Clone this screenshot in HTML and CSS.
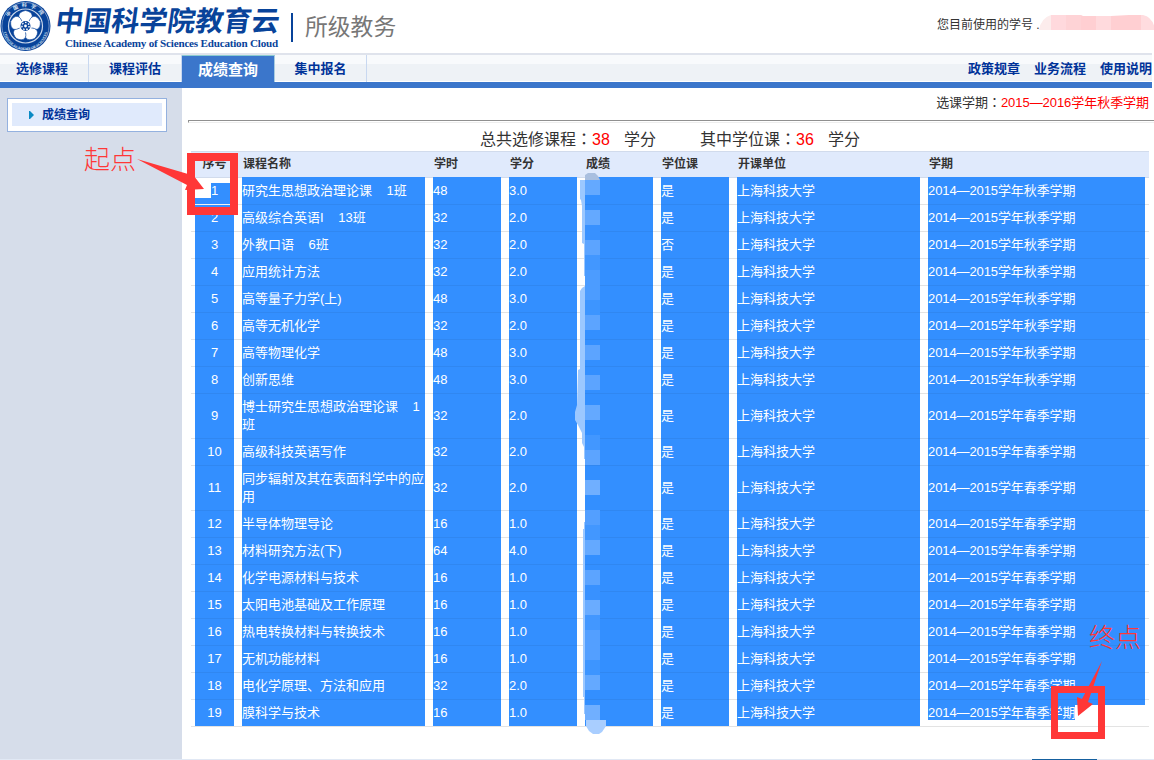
FILE: index.html
```html
<!DOCTYPE html>
<html lang="zh-CN">
<head>
<meta charset="utf-8">
<title>所级教务 - 成绩查询</title>
<link rel="stylesheet" href="styles.css">
</head>
<body>
<header class="top">
  <svg class="seal" viewBox="0 0 52 52" width="52" height="52">
    <defs>
      <path id="ring-top" d="M6.500 26a19 19 0 0 1 38 0"/>
      <path id="ring-bottom" d="M3.500 28a22 22 0 0 0 44 0"/>
    </defs>
    <circle cx="25.500" cy="26" r="25" fill="#08439a"/>
    <circle cx="25.500" cy="26" r="23.600" fill="none" stroke="#8fa9d2" stroke-width=".8"/>
    <circle cx="25.500" cy="26" r="17" fill="#08439a" stroke="#cbd8eb" stroke-width="1.200"/>
    <text class="seal-cn"><textPath href="#ring-top" startOffset="9">中国科学院</textPath></text>
    <text class="seal-en"><textPath href="#ring-bottom" startOffset="4">CHINESE ACADEMY OF SCIENCES</textPath></text>
    <g fill="#fff" transform="translate(25.500 26)">
      <path id="petal" d="M-2-4C-9-8-8-14 0-15.500C8-14 9-8 2-4Z" stroke="#08439a" stroke-width=".6"/>
      <use href="#petal" transform="rotate(72)"/><use href="#petal" transform="rotate(144)"/>
      <use href="#petal" transform="rotate(216)"/><use href="#petal" transform="rotate(288)"/>
      <circle r="6.500"/>
    </g>
    <circle cx="25.500" cy="26" r="5" fill="#08439a"/>
    <circle cx="25.500" cy="26" r="3.600" fill="none" stroke="#fff" stroke-width="1.400" stroke-dasharray="1.600 1.600"/>
    <circle cx="25.500" cy="26" r="1.400" fill="#fff"/>
  </svg>
  <div class="brand">
    <div class="brand-cn">中国科学院教育云</div>
    <div class="brand-en">Chinese Academy of Sciences Education Cloud</div>
  </div>
  <div class="system">所级教务</div>
  <div class="account">您目前使用的学号 .
    <svg class="hidden-id" width="116" height="15" viewBox="0 0 116 15">
      <clipPath id="id-shape"><path d="M0 15Q2 3 12 0H42L44 1H72L90 0H104Q114 2 116 15Z"/></clipPath>
      <g clip-path="url(#id-shape)">
        <path fill="#fcecec" d="M0 0h12v15H0z"/><path fill="#ffd9dd" d="M12 0h15v15H12z"/>
        <path fill="#fed3d6" d="M27 0h15v15H27z"/><path fill="#ffcfd2" d="M42 0h15v15H42z"/>
        <path fill="#ffdadd" d="M57 0h15v15H57z"/><path fill="#ffcfd2" d="M72 0h30v15H72z"/>
        <path fill="#ffdcdf" d="M102 0h14v15h-14z"/>
      </g>
    </svg>
  </div>
</header>
<nav class="nav">
  <a class="tab tab-first">选修课程</a><a class="tab">课程评估</a><a class="tab active">成绩查询</a><a class="tab">集中报名</a>
  <div class="links"><a>政策规章</a><a>业务流程</a><a>使用说明</a></div>
</nav>
<div class="body">
  <aside class="side"><div class="menu"><a class="menu-item"><svg width="5" height="8" viewBox="0 0 5 8"><path fill="#0a8ac4" d="M0 0h1l4 4-4 4H0z"/></svg>成绩查询</a></div></aside>
  <main class="main">
    <div class="term">选课学期<span class="colon" lang="zh-TW">：</span><span class="red">2015—2016学年秋季学期</span></div>
    <div class="rule"></div>
    <div class="summary"><span class="label">总共选修课程<span class="colon" lang="zh-TW">：</span></span><span class="red num">38</span><span class="unit">学分</span><span class="label label-deg">其中学位课<span class="colon" lang="zh-TW">：</span></span><span class="red num">36</span><span class="unit">学分</span></div>
    <div class="grid" id="grid">
      <div class="row head"><div>序号</div><div>课程名称</div><div>学时</div><div>学分</div><div>成绩</div><div>学位课</div><div>开课单位</div><div>学期</div></div>
    </div>
  </main>
</div>
<footer class="foot"><div class="foot-mark"></div></footer>
<svg class="marks" id="marks" width="1154" height="760" viewBox="0 0 1154 760">
  <path fill="#a9bfdf" d="M585 180v-5l3-2h7l3 3 2 4z"/>
  <path fill="#9cc8ff" d="M580 180H585V276H584V244L582 243V206L581 200L580 199ZM585 286V459H584V447L582 443V433L578 425L575 420V412L577 405L578 370L580 369V291L582 288ZM584 522H585V714H584V697H583V529H584Z"/>
  <g id="mosaic"></g>
  <path fill="#a9ceff" d="M586 720h20v6l-4 6-3 2h-6l-4-3-3-5z"/>
  <g fill="none" stroke="#ff3737">
    <path stroke-width="8" d="M191 157h43v54h-43z"/>
    <path stroke-width="7" d="M1054.500 689.500h47v46h-47z"/>
  </g>
  <path fill="#ff3737" d="M137 159l51 15-1-7 17 22-19 1 2-5zM1102 661l-14 41 5 2-15 12-1-19 5 2z"/>
  <text x="84" y="169">起点</text><text x="1089" y="647">终点</text>
</svg>
<script src="app.js"></script>
</body>
</html>
```
FILE: styles.css
```css
* { box-sizing: border-box; }
body {
  margin: 0; width: 1154px; height: 760px; overflow: hidden; position: relative;
  display: flex; flex-direction: column; background: #fff; color: #333;
  font: 13px/18px "Liberation Sans", "Noto Sans CJK SC", sans-serif;
}
.top { display: flex; height: 53px; flex: none; }
.seal { flex: none; margin-right: 4px; }
.seal-cn, .seal-en { fill: #dbe5f3; }
.seal-cn { font: bold 5px "Noto Sans CJK SC", sans-serif; letter-spacing: 3.5px; }
.seal-en { font: bold 3.6px "Liberation Serif", serif; }
.brand { width: 235px; color: #08439a; white-space: nowrap; }
.brand-cn { height: 36px; font: bold 28px/38px "Noto Sans CJK SC", sans-serif; transform: skewX(-8deg); }
.brand-en { padding-left: 9px; font: bold 11.1px/14px "Liberation Serif", serif; letter-spacing: -.2px; }
.system {
  height: 29px; margin-top: 13px; padding-left: 12px; border-left: 2px solid #08439a;
  font: 400 22.800px/26px "Noto Sans CJK SC", sans-serif; color: #777;
}
.account { display: flex; width: 217px; margin: 16px 0 0 auto; font-size: 12px; white-space: nowrap; }
.hidden-id { flex: none; margin: -1px 0 0 -1px; }
.nav {
  display: flex; flex: none; height: 35px; margin-right: 2px;
  border-top: 2px solid #dfe3ec; border-bottom: 6px solid #3b76cb;
  background: linear-gradient(#f8fafc 9px, #eef2f6 9px, #eef2f6 26px, #fff 26px);
  color: #039; font-weight: bold; line-height: 27px;
}
.tab { width: 93px; text-align: center; border-right: 1px solid #c8d8f0; }
.tab-first { width: 89px; padding-right: 4px; }
.tab.active { width: 93px; background: #3b76cb; color: #fff; border-top: 1px solid #8ccbd0; border-right-color: #a8cce0; font-size: 15px; }
.tab + .tab { flex: none; }
.tab:nth-child(4) { width: 92px; }
.links { display: flex; gap: 14px; margin-left: auto; }
.body { display: flex; height: 671px; flex: none; }
.side { width: 182px; padding: 10px 15px 0 7px; background: #d6ddea; }
.menu { height: 34px; padding: 4px; border: 1px solid #94b1df; background: #fff; }
.menu-item { display: flex; align-items: center; gap: 8px; height: 23px; padding-left: 17px; background: #e0eafc; color: #039; font-size: 12px; font-weight: bold; }
.main { flex: 1; padding-left: 6px; }
.term { height: 32px; padding: 6px 5px 0 0; text-align: right; letter-spacing: -.05px; }
.colon { font-family: "Noto Sans CJK TC", sans-serif; line-height: 1; }
.red { color: #f00; }
.rule { height: 3px; border: solid; border-width: 1px 0 1px 1px; border-color: #909090 #eee #eee #909090; }
.summary { display: flex; height: 28px; padding-left: 292px; font-size: 16px; line-height: 33px; white-space: nowrap; }
.label { width: 112px; }
.label-deg { width: 96px; margin-left: 44px; }
.num, .unit { width: 32px; }
.grid { width: 958px; margin-left: 3px; }
.row { display: grid; grid-template-columns: 47px 191px repeat(4, 76px) 191px 225px; min-height: 27px; box-shadow: inset 0 -1px #e3e3e3; }
.cell {
  display: flex; align-items: center; margin: 0 4px; padding-bottom: 1px;
  border-bottom: 1px solid rgba(0, 0, 0, .055); background: #338fff; color: #fff;
}
.cell:first-child { justify-content: center; }
.cell:nth-child(2) { word-spacing: -2px; }
.cell:nth-child(8) { letter-spacing: -.1px; }
.head + .row .cell:not(.select-start) { box-shadow: 0 -1px #338fff; }
.row:last-child .cell { border-bottom-color: #e3e3e3; background-clip: padding-box; }
.row.tall { min-height: 45px; }
.head { border-top: 1px solid #d1dbec; background: #e0eafc; box-shadow: inset 0 -1px #d1dbec; font-size: 12px; font-weight: bold; line-height: 25px; }
.head > div { padding-left: 5px; }
.head > div:first-child { padding: 0; text-align: center; }
.select-start { background: linear-gradient(#338fff, #338fff) 16px 5px / 23px 15px no-repeat, linear-gradient(#fff 20px, #338fff 20px); }
.select-end { background: linear-gradient(#338fff, #338fff) 0 0 / 147px 20px no-repeat, linear-gradient(#338fff 5px, #fff 5px); }
.foot { display: flex; height: 1px; background: #e1e8f4; padding-left: 1032px; }
.foot-mark { width: 65px; background: #15609f; }
.marks { position: absolute; left: 0; top: 0; }
.marks text { font: 300 26px "Noto Sans CJK SC", sans-serif; fill: #ff3737; }
```
FILE: app.js
```js
const school = '上海科技大学';
const fall = '2014—2015学年秋季学期', spring = '2014—2015学年春季学期';
const courses = [
  ['研究生思想政治理论课\u3000 1班', 48, '3.0', '是', fall],
  ['高级综合英语I\u3000 13班', 32, '2.0', '是', fall],
  ['外教口语\u3000 6班', 32, '2.0', '否', fall],
  ['应用统计方法', 32, '2.0', '是', fall],
  ['高等量子力学(上)', 48, '3.0', '是', fall],
  ['高等无机化学', 32, '2.0', '是', fall],
  ['高等物理化学', 48, '3.0', '是', fall],
  ['创新思维', 48, '3.0', '是', fall],
  ['博士研究生思想政治理论课\u3000 1班', 32, '2.0', '是', spring],
  ['高级科技英语写作', 32, '2.0', '是', spring],
  ['同步辐射及其在表面科学中的应用', 32, '2.0', '是', spring],
  ['半导体物理导论', 16, '1.0', '是', spring],
  ['材料研究方法(下)', 64, '4.0', '是', spring],
  ['化学电源材料与技术', 16, '1.0', '是', spring],
  ['太阳电池基础及工作原理', 16, '1.0', '是', spring],
  ['热电转换材料与转换技术', 16, '1.0', '是', spring],
  ['无机功能材料', 16, '1.0', '是', spring],
  ['电化学原理、方法和应用', 32, '2.0', '是', spring],
  ['膜科学与技术', 16, '1.0', '是', spring]
];
const grid = document.getElementById('grid');
courses.forEach(([name, hours, credit, degree, term], i) => {
  const row = document.createElement('div');
  row.className = name.length > 14 ? 'row tall' : 'row';
  [i + 1, name, hours, credit, '', degree, school, term].forEach((value, c) => {
    const cell = document.createElement('div');
    cell.className = 'cell';
    if (i === 0 && c === 0) cell.classList.add('select-start');
    if (i === courses.length - 1 && c === 7) cell.classList.add('select-end');
    cell.textContent = value;
    row.append(cell);
  });
  grid.append(row);
});

// Mosaic blocks over the score column: [top, height, colour]
const blocks = [
  [180, 15, '#64a9ff'], [210, 15, '#64a9ff'], [225, 15, '#3891ff'], [240, 15, '#5ca4ff'],
  [255, 15, '#4297ff'], [270, 30, '#4c9cff'], [300, 15, '#3d95ff'], [315, 15, '#5ca4ff'],
  [345, 15, '#5ca4ff'], [375, 15, '#5ca4ff'], [405, 15, '#64a9ff'], [435, 15, '#4297ff'],
  [450, 15, '#5ca4ff'], [480, 15, '#70afff'], [510, 15, '#539fff'], [525, 15, '#4297ff'],
  [540, 15, '#64a9ff'], [570, 15, '#5ca4ff'], [585, 15, '#3891ff'], [600, 15, '#6aacff'],
  [615, 15, '#4297ff'], [630, 30, '#539fff'], [660, 15, '#3d95ff'], [675, 15, '#64a9ff'],
  [705, 15, '#70afff']
];
document.getElementById('mosaic').innerHTML = blocks
  .map(([y, h, fill]) => `<rect x="585" y="${y}" width="15" height="${h}" fill="${fill}"/>`).join('');
```
